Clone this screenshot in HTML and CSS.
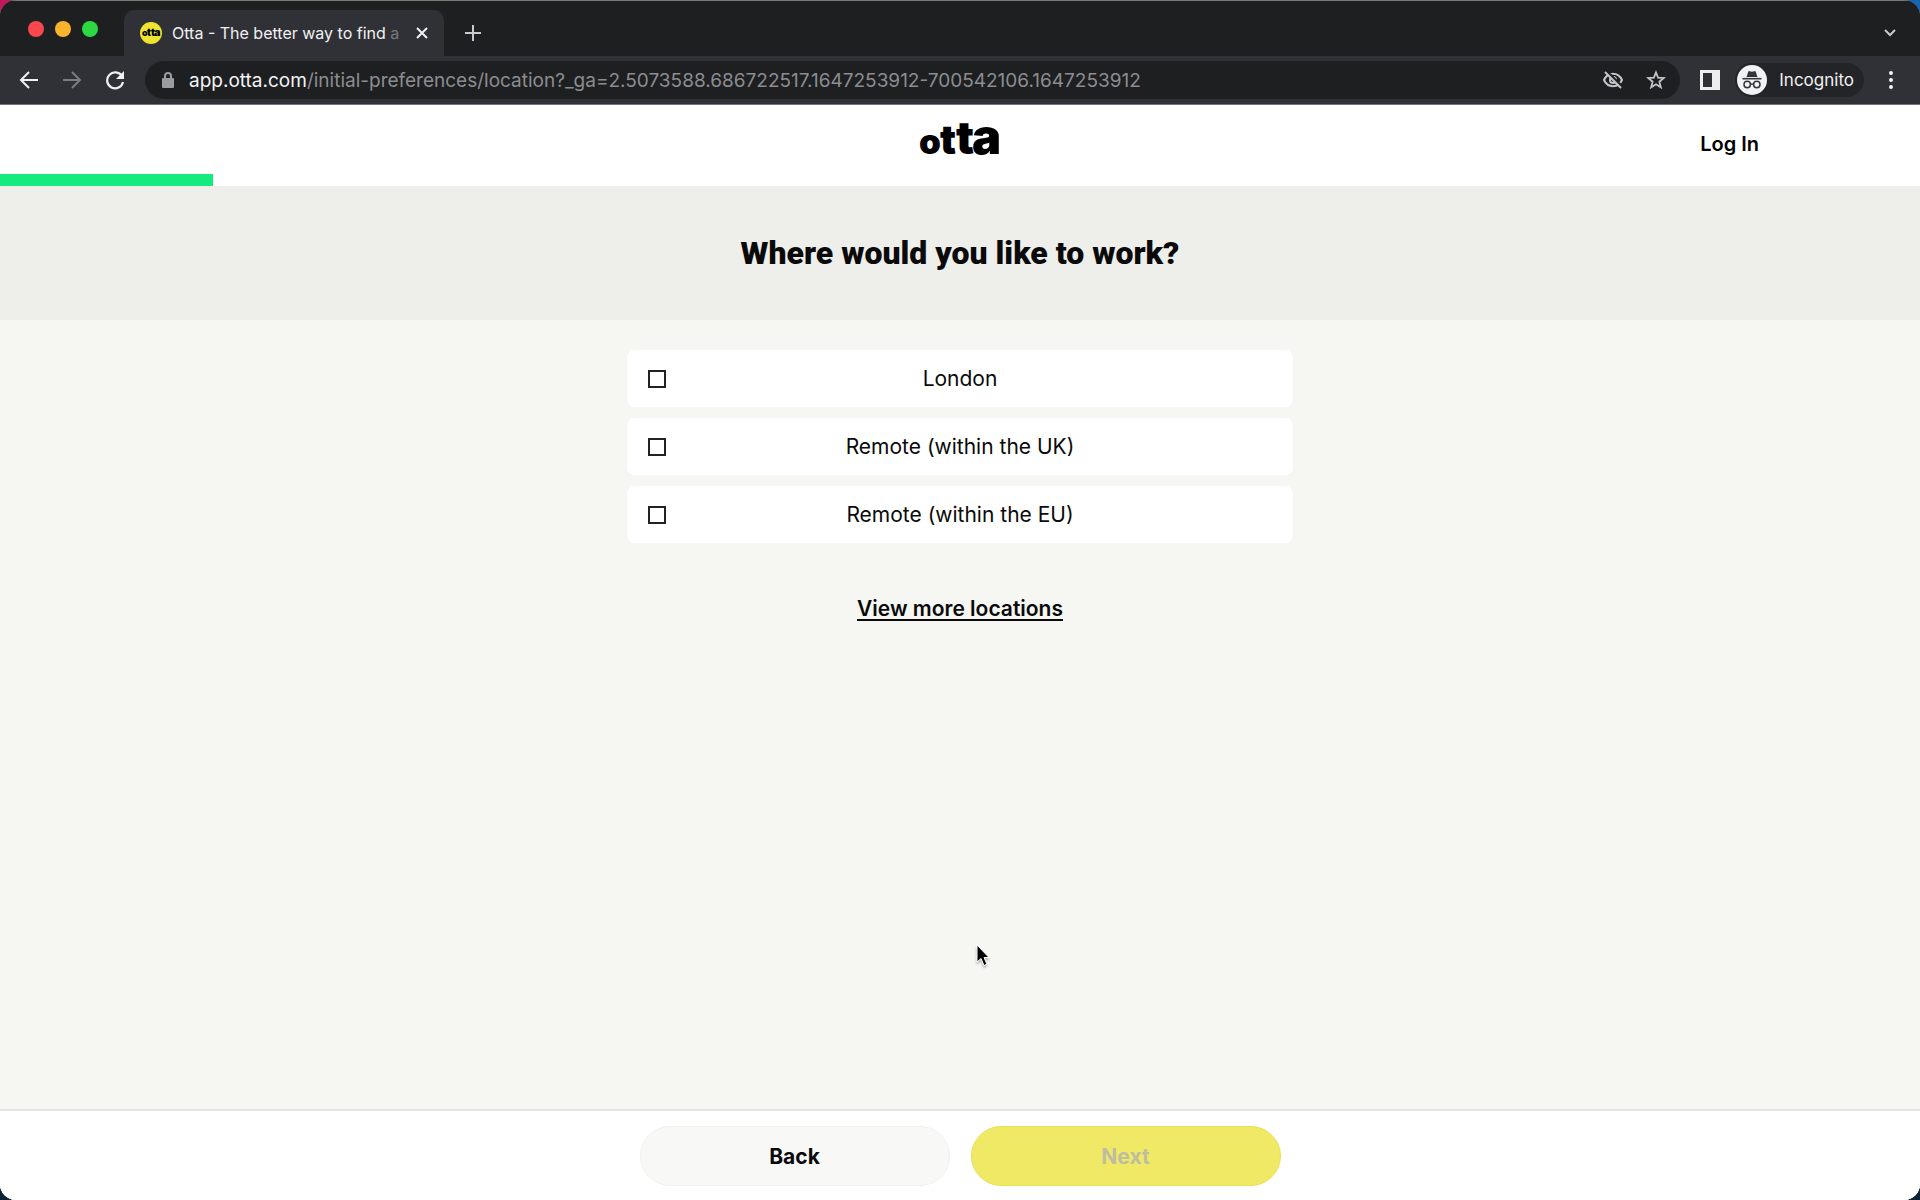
FILE: index.html
```html
<!DOCTYPE html>
<html lang="en">
<head>
<meta charset="utf-8">
<title>Otta - The better way to find a job</title>
<link rel="stylesheet" href="styles.css">
</head>
<body>
<div class="window">
  <header class="chrome">
    <div class="tabstrip">
      <div class="lights"><button class="light red" aria-label="Close"></button><button class="light amber" aria-label="Minimise"></button><button class="light green" aria-label="Zoom"></button></div>
      <div class="tab">
        <svg class="favicon" viewBox="0 0 22 22" aria-hidden="true"><circle cx="11" cy="11" r="11" fill="#ece42f"/><text y="14" class="logo-text"><tspan x="2" font-size="9">o</tspan><tspan x="7" font-size="10">t</tspan><tspan x="11" font-size="10">t</tspan><tspan x="14" font-size="11">a</tspan></text></svg>
        <span class="tab-title">Otta - The better way to find <span class="fade">a</span></span>
        <button class="icon-btn tab-close" aria-label="Close tab"><svg width="12" height="12" viewBox="0 0 12 12"><path d="M1 1l10 10M11 1L1 11" stroke="#f1f1f3" stroke-width="2"/></svg></button>
      </div>
      <button class="icon-btn" aria-label="New tab"><svg width="16" height="16" viewBox="0 0 16 16"><path d="M8 0v16M0 8h16" stroke="#c9cacd" stroke-width="2"/></svg></button>
      <button class="icon-btn tab-search" aria-label="Search tabs"><svg width="12" height="8" viewBox="0 0 12 8"><path d="M1 1l5 5 5-5" fill="none" stroke="#c9cacd" stroke-width="2"/></svg></button>
    </div>
    <div class="toolbar">
      <nav class="nav">
        <button class="icon-btn" aria-label="Back"><svg width="20" height="20" viewBox="0 0 20 20"><path d="M19 10H2M10 2l-8 8 8 8" fill="none" stroke="#f1f1f3" stroke-width="2"/></svg></button>
        <button class="icon-btn" aria-label="Forward"><svg width="20" height="20" viewBox="0 0 20 20"><path d="M1 10h17M10 2l8 8-8 8" fill="none" stroke="#7c7d80" stroke-width="2"/></svg></button>
        <button class="icon-btn" aria-label="Reload"><svg width="20" height="20" viewBox="0 0 20 20"><path d="M17 6.2A8 8 0 1 0 18 12" fill="none" stroke="#f1f1f3" stroke-width="2.2"/><path d="M19 1v8h-8z" fill="#f1f1f3"/></svg></button>
      </nav>
      <div class="omnibox">
        <svg width="12" height="16" viewBox="0 0 12 16"><rect y="6" width="12" height="10" rx="1" fill="#9b9c9f"/><path d="M3 7V4a3 3 0 0 1 6 0v3" fill="none" stroke="#9b9c9f" stroke-width="2"/></svg>
        <div class="url" role="textbox" aria-label="Address" contenteditable="true" spellcheck="false"><span class="host">app.otta.com</span>/initial-preferences/location?_ga=2.5073588.686722517.1647253912-700542106.1647253912</div>
        <button class="icon-btn" aria-label="Third-party cookies blocked"><svg width="20" height="18" viewBox="0 0 20 18"><path d="M1 9c2-4.400 5.200-6.200 9-6.200S17 4.600 19 9c-2 4.400-5.200 6.200-9 6.200S3 13.400 1 9z" fill="none" stroke="#c4c5c8" stroke-width="2"/><circle cx="10" cy="9" r="3" fill="none" stroke="#c4c5c8" stroke-width="2"/><path d="M3.500 0l15.500 15.500" stroke="#1e1f21" stroke-width="2.500"/><path d="M2 1l16 16" stroke="#c4c5c8" stroke-width="2"/></svg></button>
        <button class="icon-btn" aria-label="Bookmark this page"><svg width="20" height="20" viewBox="0 0 20 20"><path d="M10 2.500l2.100 5.200 5.600.4-4.300 3.600 1.400 5.500L10 14.200l-4.800 3 1.400-5.500-4.300-3.600 5.600-.4z" fill="none" stroke="#c4c5c8" stroke-width="1.800"/></svg></button>
      </div>
      <button class="icon-btn" aria-label="Side panel"><svg width="20" height="20" viewBox="0 0 20 20"><path fill="#eeeef0" fill-rule="evenodd" d="M0 0h20v20H0zM3 3v14h9V3z"/></svg></button>
      <button class="incognito">
        <svg width="30" height="30" viewBox="0 0 30 30" aria-hidden="true"><circle cx="15" cy="15" r="15" fill="#f1f2f5"/><path d="M9.500 12l2-6 3.500.7 3.500-.7 2 6z" fill="#35363a"/><path d="M5.500 13.700h19" stroke="#35363a" stroke-width="1.600"/><g fill="none" stroke="#35363a" stroke-width="1.500"><circle cx="10.200" cy="19.500" r="3.200"/><circle cx="19.800" cy="19.500" r="3.200"/><path d="M13.400 19.500q1.600-1.200 3.200 0"/></g></svg>
        Incognito
      </button>
      <button class="icon-btn menu" aria-label="Menu"><svg width="4" height="18" viewBox="0 0 4 18" fill="#f1f1f3"><circle cx="2" cy="2" r="2"/><circle cx="2" cy="9" r="2"/><circle cx="2" cy="16" r="2"/></svg></button>
    </div>
  </header>

  <div class="page">
    <header class="site-header">
      <a class="logo" href="#" aria-label="Otta"><svg width="82" height="66" viewBox="0 0 82 66"><text y="49" class="logo-text"><tspan x="0" font-size="35">o</tspan><tspan x="21" font-size="40">t</tspan><tspan x="37" font-size="45">t</tspan><tspan x="53" font-size="49">a</tspan></text></svg></a>
      <a class="login" href="#">Log In</a>
    </header>
    <div class="progress" role="progressbar" aria-label="Progress" aria-valuenow="11" aria-valuemin="0" aria-valuemax="100"><div class="progress-fill" style="width:11.1%"></div></div>
    <div class="question"><h1>Where would you like to work?</h1></div>
    <main class="content">
      <div class="options">
        <label class="option"><input type="checkbox"><span>London</span></label>
        <label class="option"><input type="checkbox"><span>Remote (within the UK)</span></label>
        <label class="option"><input type="checkbox"><span>Remote (within the EU)</span></label>
      </div>
      <a class="more" href="#">View more locations</a>
    </main>
    <footer class="actions">
      <button class="btn back">Back</button>
      <button class="btn next" disabled>Next</button>
    </footer>
  </div>
  <svg class="pointer" width="14" height="24" viewBox="0 0 14 24" aria-hidden="true"><path d="M1 1v17l4-3.500 3 7 3-1.300-3-6.700h5z" fill="#000" stroke="#fff" stroke-width="1"/></svg>
</div>
</body>
</html>
```
FILE: styles.css
```css
* { box-sizing: border-box; }
body {
  margin: 0;
  background: linear-gradient(90deg, #c2185b 0 50%, #1565b0 50%) top / 100% 50% no-repeat #0c2436;
  font-family: Inter, "Liberation Sans", sans-serif;
  color: #0a0a0a;
}
button { font: inherit; border: 0; padding: 0; background: none; }
svg { display: block; flex: none; }
.logo-text { font-family: Inter, sans-serif; font-weight: 900; }

.window {
  position: relative;
  display: flex;
  flex-direction: column;
  min-height: 100vh;
  border-radius: 16px;
  overflow: hidden;
  background: #fff;
}

.chrome { background: #303136; color: #f1f1f3; border-bottom: 1px solid #737477; }
.tabstrip {
  display: flex;
  align-items: flex-end;
  height: 56px;
  padding-right: 24px;
  background: #1e1f21;
  border-top: 1px solid #77787a;
}
.tabstrip > .icon-btn { height: 46px; }
.lights { display: flex; align-self: center; gap: 11px; padding: 0 26px 0 28px; }
.light { width: 16px; height: 16px; border-radius: 50%; }
.red { background: #f9474f; }
.amber { background: #f9b42d; }
.green { background: #2ed843; }
.tab {
  display: flex;
  align-items: center;
  width: 320px;
  height: 46px;
  padding: 0 16px;
  margin-right: 21px;
  border-radius: 10px 10px 0 0;
  background: #303136;
}
.favicon { width: 22px; height: 22px; margin-right: 10px; }
.tab-title { flex: 1; font-size: 16px; white-space: nowrap; }
.fade { color: #77787b; }
.icon-btn { display: grid; place-items: center; flex: none; }
.tab-search { margin-left: auto; }

.toolbar { display: flex; align-items: center; height: 48px; padding: 0 27px 0 19px; }
.nav { display: flex; gap: 23px; margin-right: 20px; }
.omnibox {
  display: flex;
  align-items: center;
  flex: 1;
  height: 38px;
  padding: 0 14px 0 17px;
  margin-right: 20px;
  border-radius: 20px;
  background: #1e1f21;
  gap: 23px;
}
.omnibox > svg { margin-right: -8px; }
.url { flex: 1; min-width: 0; overflow: hidden; white-space: nowrap; font-size: 19px; color: #8c8d91; outline: 0; }
.host { color: #f4f4f6; }
.incognito {
  display: flex;
  align-items: center;
  gap: 12px;
  height: 34px;
  padding: 0 10px 0 2px;
  margin: 0 25px 0 15px;
  border-radius: 17px;
  background: #232427;
  color: #f1f1f3;
  font-size: 17px;
}

.page { display: flex; flex: 1; flex-direction: column; background: #f6f7f2; }
.site-header {
  display: grid;
  grid-template-columns: 1fr auto 1fr;
  height: 69px;
  padding: 0 161px;
  background: #fff;
}
.logo { grid-column: 2; color: #000; }
.login { justify-self: end; padding-top: 27px; color: #000; font-size: 20px; font-weight: 600; line-height: 24px; text-decoration: none; }
.progress { background: #fff; }
.progress-fill { height: 12px; background: #14ea7d; }
.question { padding: 48px 24px; background: #eeeeea; text-align: center; }
h1 { margin: 0; font-family: Roboto, sans-serif; font-size: 32px; font-weight: 900; line-height: 38px; }
.content { display: flex; flex: 1; flex-direction: column; align-items: center; padding: 30px 24px; }
.options { display: grid; gap: 11px; width: 100%; max-width: 666px; }
.option {
  display: grid;
  grid-template-columns: 18px 1fr 18px;
  align-items: center;
  height: 57px;
  padding: 0 21px;
  border-radius: 8px;
  background: #fff;
  font-size: 21px;
  text-align: center;
}
.option input { appearance: none; width: 18px; height: 18px; margin: 0; border: 2px solid #222; }
.more { margin-top: 52px; color: #0a0a0a; font-size: 21px; font-weight: 600; line-height: 28px; text-underline-offset: 3px; }
.actions {
  display: flex;
  justify-content: center;
  gap: 21px;
  padding: 15px 24px 14px;
  border-top: 2px solid #e3e4e2;
  background: #fff;
}
.btn { width: 310px; height: 60px; border-radius: 30px; font-size: 21px; font-weight: 700; }
.back { background: #f8f8f7; border: 1px solid #f1f1ef; color: #0a0a0a; }
.next { background: #f0e966; border: 1px solid #e9e156; color: #bfbda0; }
.pointer { position: absolute; left: 976px; top: 944px; filter: drop-shadow(0 2px 1px #0004); }
```
